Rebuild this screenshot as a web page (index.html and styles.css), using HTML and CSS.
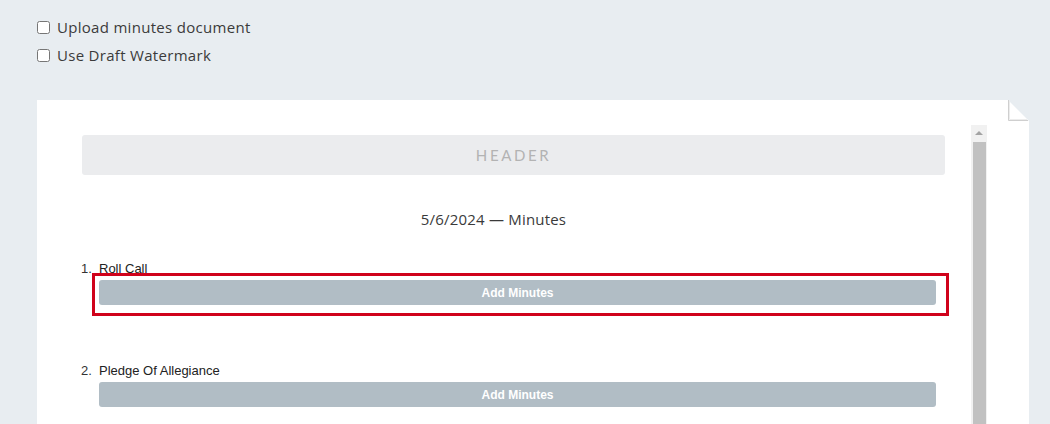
FILE: index.html
```html
<!DOCTYPE html>
<html>
<head>
<meta charset="utf-8">
<link rel="stylesheet" href="styles.css">
</head>
<body>
<div class="options">
  <label class="opt"><input type="checkbox"><span>Upload minutes document</span></label>
  <label class="opt"><input type="checkbox"><span>Use Draft Watermark</span></label>
</div>
<div class="paper">
  <svg class="fold" width="21" height="21" viewBox="0 0 21 21">
    <polygon points="0,0 21,0 21,21" fill="#e8edf1"/>
    <path d="M0.5 0 V20.5 H20" fill="none" stroke="#cfcfcf" stroke-width="1"/>
    <path d="M1.5 1 V19.5 H19" fill="none" stroke="#ececec" stroke-width="1"/>
  </svg>
  <div class="content">
    <div class="header">HEADER</div>
    <div class="title">5/6/2024 — Minutes</div>
    <ol class="items">
      <li class="item">
        <div class="label">Roll Call</div>
        <button class="add">Add Minutes</button>
        <div class="highlight"></div>
      </li>
      <li class="item">
        <div class="label">Pledge Of Allegiance</div>
        <button class="add">Add Minutes</button>
      </li>
    </ol>
  </div>
  <div class="scrollbar">
    <div class="arrow"></div>
    <div class="thumb"></div>
  </div>
</div>
</body>
</html>
```
FILE: styles.css
```css
html, body {
  margin: 0;
  padding: 0;
  background: #e8edf1;
  height: 424px;
  overflow: hidden;
}
body {
  font-family: "Open Sans", Lato, sans-serif;
  color: #3b3b3b;
}
.options {
  display: flex;
  flex-direction: column;
  padding: 13px 0 0 37px;
}
.opt {
  display: flex;
  align-items: center;
  height: 28px;
  font-size: 15px;
  letter-spacing: 0.3px;
}
.opt input {
  margin: 0 7px 0 0;
  width: 13px;
  height: 13px;
}
.paper {
  position: relative;
  margin: 31px 0 0 37px;
  width: 992px;
  height: 600px;
  background: #fff;
  display: flex;
  padding-top: 25px;
  box-sizing: border-box;
}
.fold {
  position: absolute;
  top: 0;
  right: 0;
}
.content {
  margin-left: 45px;
  width: 863px;
  padding-top: 10px;
}
.header {
  height: 40px;
  background: #ebecee;
  border-radius: 3px;
  display: flex;
  align-items: center;
  justify-content: center;
  font-family: Lato, sans-serif;
  font-size: 15px;
  letter-spacing: 2.6px;
  color: #b3b3b3;
}
.title {
  margin: 34px 40px 0 0;
  text-align: center;
  font-size: 15px;
  line-height: 20px;
  letter-spacing: 0.2px;
  color: #3a3a3a;
}
.items {
  margin: 32px 0 0 0;
  padding: 0 0 0 17px;
  font-family: "Liberation Sans", Arial, sans-serif;
  font-size: 13px;
  color: #222;
}
.item {
  position: relative;
  margin-bottom: 58px;
  padding-right: 9px;
}
.item::marker {
  content: counter(list-item) ".  ";
  color: #333;
}
.label {
  line-height: 16px;
  margin-bottom: 3px;
}
.add {
  display: block;
  width: 100%;
  height: 25px;
  border: none;
  border-radius: 3px;
  background: #b1bdc5;
  color: #fff;
  font-family: "Liberation Sans", Arial, sans-serif;
  font-weight: bold;
  font-size: 12px;
  padding: 0;
}
.highlight {
  position: absolute;
  left: -7px;
  right: -4px;
  top: 12px;
  height: 37px;
  border: 3px solid #d0021b;
}
.scrollbar {
  margin-left: 26px;
  width: 16px;
  background: #f1f1f1;
  display: flex;
  flex-direction: column;
  align-items: center;
}
.arrow {
  height: 17px;
  width: 16px;
  position: relative;
}
.arrow::before {
  content: "";
  position: absolute;
  left: 4px;
  top: 6px;
  border-left: 4px solid transparent;
  border-right: 4px solid transparent;
  border-bottom: 4px solid #a3a3a3;
}
.thumb {
  width: 13px;
  height: 400px;
  background: #c1c1c1;
}
```
